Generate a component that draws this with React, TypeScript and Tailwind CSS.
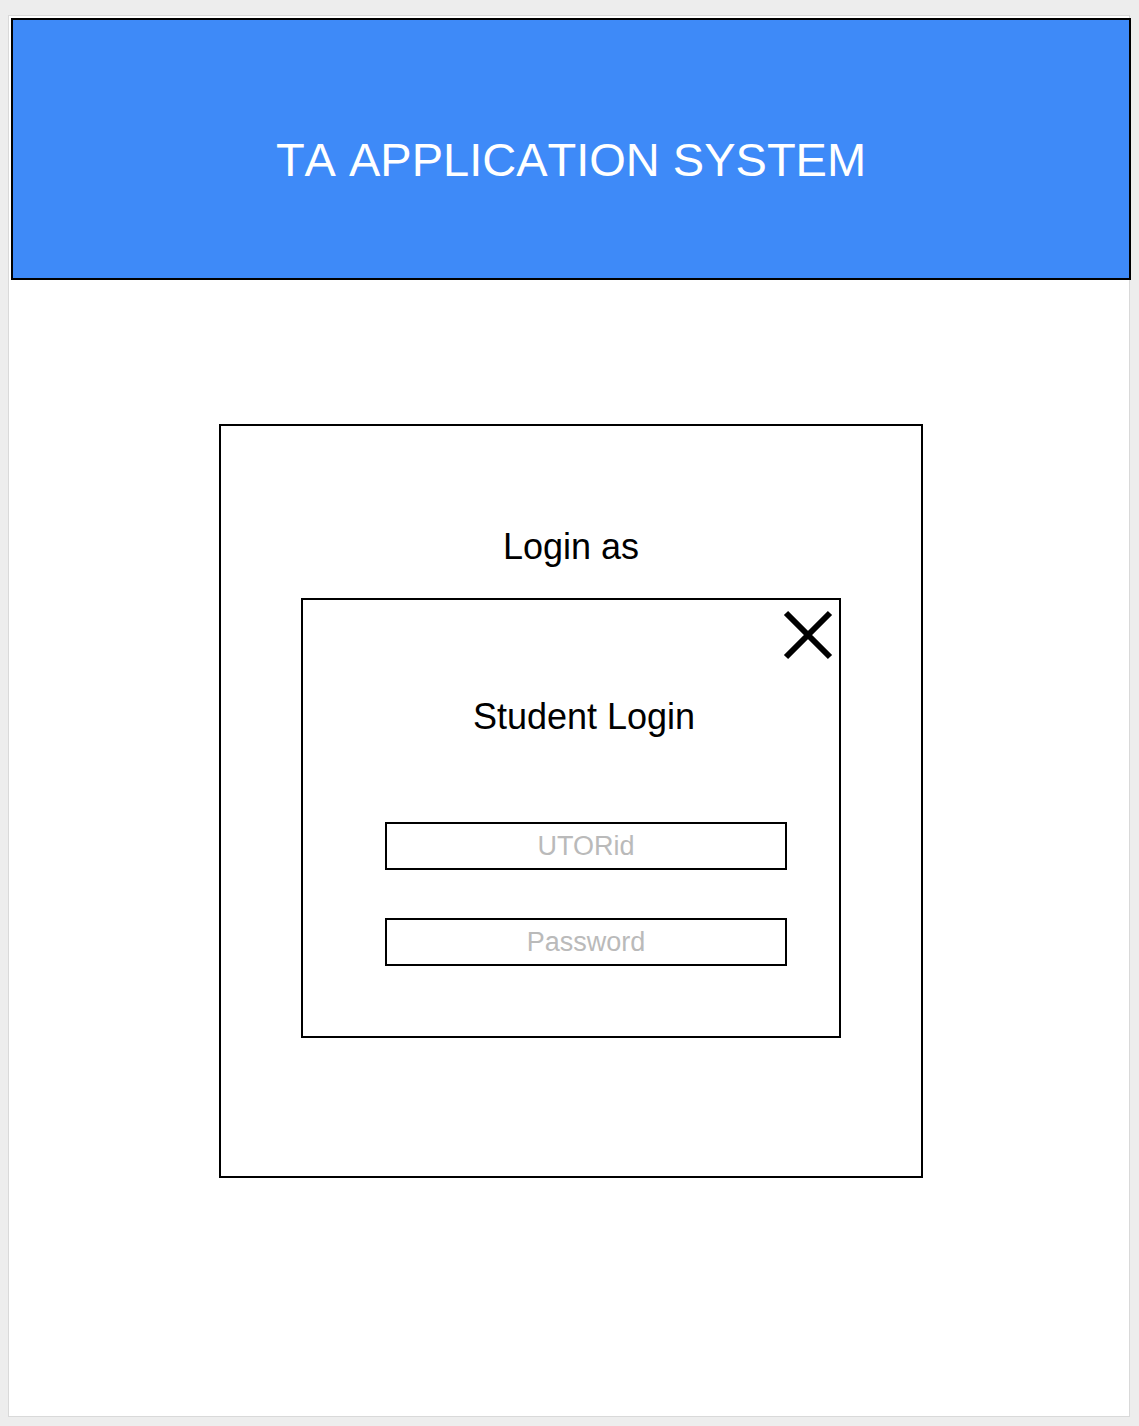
export default function App() {
  return (
    <div
      className="min-h-[1426px] w-full bg-[#ededed] pt-[15px] pl-[8px]"
      style={{ fontFamily: '"Liberation Sans", Arial, sans-serif' }}
    >
      <div className="h-[1402px] w-[1122px] border border-[#d9d9d9] bg-white">
        <header className="ml-[2px] mt-[2px] flex h-[262px] w-[1120px] items-center justify-center border-2 border-black bg-[#3e8af8] pt-[22px] text-[47px] leading-[54px] text-white [font-kerning:none]">
          TA APPLICATION SYSTEM
        </header>

        <div className="ml-[210px] mt-[144px] flex h-[754px] w-[704px] flex-col border-2 border-black">
          <p className="pt-[100px] text-center text-[36px] leading-[41px] text-black">Login as</p>

          <div className="relative ml-[80px] mt-[31px] flex h-[440px] w-[540px] flex-col border-2 border-black">
            <button type="button" className="absolute right-[6px] top-[10px] h-[50px] w-[50px]">
              <svg viewBox="0 0 50 50" className="h-full w-full" fill="none" stroke="black" strokeWidth="6">
                <path d="M3 3L47 47M47 3L3 47" />
              </svg>
            </button>

            <p className="pl-[26px] pt-[96px] text-center text-[36px] leading-[41px] text-black">Student Login</p>

            <div className="ml-[82px] mt-[85px] flex flex-col gap-[48px]">
              <input
                type="text"
                placeholder="UTORid"
                className="h-[48px] w-[402px] border-2 border-black bg-white text-center text-[27px] text-black outline-none placeholder:text-[#bababa]"
              />
              <input
                type="password"
                placeholder="Password"
                className="h-[48px] w-[402px] border-2 border-black bg-white text-center text-[27px] text-black outline-none placeholder:text-[#bababa]"
              />
            </div>
          </div>
        </div>
      </div>
    </div>
  );
}
